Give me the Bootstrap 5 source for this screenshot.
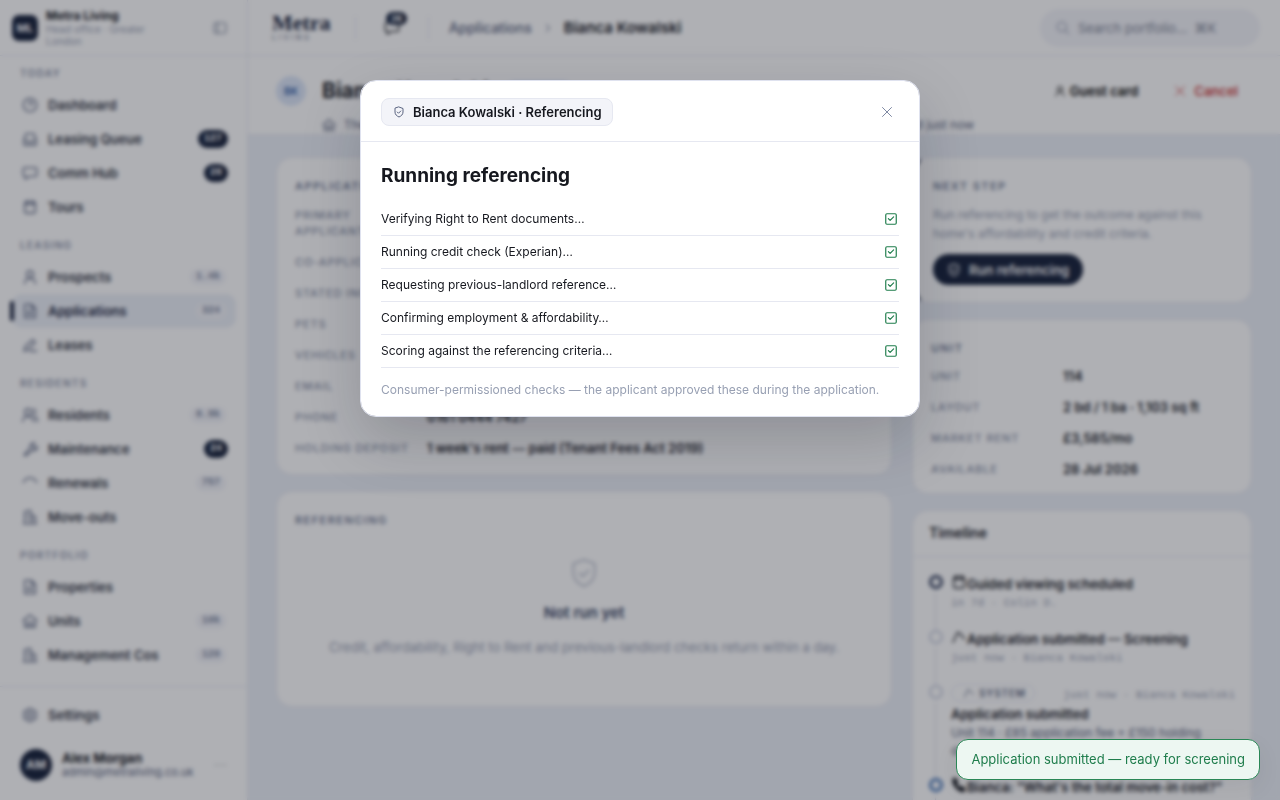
<!DOCTYPE html>
<html lang="en-GB">
<head>
<meta charset="utf-8">
<meta name="viewport" content="width=device-width, initial-scale=1">
<title>Bianca Kowalski · Referencing</title>
<link href="https://cdn.jsdelivr.net/npm/bootstrap@5.3.0/dist/css/bootstrap.min.css" rel="stylesheet">
<style>
:root{--navy:#16213a;--ink:#16181f;--slate:#5a6480;--muted:#98a0b3;--line:#e6e8f1;--soft:#f3f4f9;--page:#ecf0f7;--ok:#1f7d4c;--mono:"Liberation Mono",monospace}
body{font-family:Inter,sans-serif;font-size:13px;line-height:18px;color:var(--ink);background:var(--page)}
a{color:inherit;text-decoration:none}
svg{fill:none;stroke:currentColor;stroke-width:2;stroke-linecap:round;stroke-linejoin:round;flex:none}
.i12{width:12px;height:12px}.i14{width:14px;height:14px}.i16{width:16px;height:16px}
.i32{width:32px;height:32px;stroke-width:1.2;color:#b4bac9}
.sidebar{width:248px;background:#fff;border-right:1px solid var(--line)}
.brand-row{height:56px;padding:0 20px 0 12px;border-bottom:1px solid var(--line)}
.brand-row svg{color:#7d869c}
.brand-mark{width:26px;height:26px;border-radius:7px;background:var(--navy);color:#fff;font-weight:700;font-size:11px}
.org-name{font-size:12px;line-height:14px;font-weight:700}
.org-sub{font-size:10px;line-height:12px;color:var(--muted)}
.side-nav{padding:9px 11px 0 12px;overflow:hidden}
.side-label{font-size:10px;line-height:16px;height:23px;padding-left:8px;font-weight:600;letter-spacing:.13em;color:#8a92a8;margin:0}
.side-group{margin-bottom:13px}
.side-link{height:34px;padding:0 8px 0 10px;border-radius:10px;font-weight:600;color:#30343f;font-size:13px}
.side-link svg{color:var(--slate);margin-right:10px}
.side-link.active{background:var(--page);position:relative;color:var(--navy)}
.side-link.active::before{content:"";position:absolute;left:-2px;top:7px;width:4px;height:20px;border-radius:2px;background:var(--navy)}
.count{font-family:var(--mono);font-size:10px;line-height:16px;padding:0 6px;border-radius:8px;background:var(--soft);color:#7c86a0;margin-left:auto;margin-right:2px}
.count-hot{background:var(--navy);color:#fff;font-weight:700;line-height:18px;border-radius:9px;margin-right:0}
.side-foot{border-top:1px solid var(--line);padding:11px 12px 19px}
.user-row{padding:0 8px;margin-top:17px;gap:10px}
.user-name{font-size:13px;line-height:14px;font-weight:700}
.user-mail{font-size:11px;line-height:14px;color:var(--slate)}
.avatar-lg{width:32px;height:32px;background:var(--navy);color:#fff;font-size:12px;font-weight:700}
.topbar{height:56px;background:#fff;border-bottom:1px solid var(--line);padding:0 20px 0 24px}
.wordmark{font-family:"Liberation Serif",serif;font-weight:700;font-size:22px;line-height:20px;color:var(--navy)}
.wordmark-sub{font-size:7px;line-height:10px;letter-spacing:.4em;color:var(--slate)}
.rule{width:1px;height:24px;background:var(--line)}
.bubble-count{position:absolute;left:6px;top:-8px;font-size:9px;line-height:13px;font-weight:700;padding:0 5px;border-radius:7px;background:var(--navy);color:#fff}
.crumbs{gap:10px}
.crumb{font-size:14px;font-weight:500;color:var(--slate)}
.crumb-now{font-size:15px;font-weight:600}
.search{width:220px;height:38px;border-radius:19px;background:var(--soft);color:var(--muted)}
.search input{border:0;background:none;outline:0;font-size:13px;width:156px;padding:0;color:var(--ink)}
.search input::placeholder{color:#7d8496}
.subhead{background:#fff;padding:19px 28px 0;height:79px;border-bottom:1px solid var(--line)}
.avatar-sm{width:30px;height:30px;background:#dce6f8;color:#3c68ac;font-size:10px;font-weight:700}
.who{font-size:21px;line-height:32px;font-weight:700;margin:0}
.state{font-size:11px;line-height:20px;padding:0 8px;border-radius:10px;background:#dce6ff;color:#3c68ac}
.ghost{border:0;background:none;font-size:13px;font-weight:600;padding:0 14px;height:32px}
.danger-ink{color:#cc3b3b}
.subline{max-width:652px;margin:9px 0 0 46px;font-size:12px;color:var(--slate)}
.content{display:grid;grid-template-columns:minmax(0,1fr) 340px;gap:20px;padding:22px 28px;align-items:start}
.stack{display:grid;gap:16px}
.panel{background:#fff;border:1px solid var(--line);border-radius:16px;padding:19px 18px 18px}
.panel-facts{padding-bottom:11px}
.panel-title{font-size:11px;line-height:18px;font-weight:600;letter-spacing:.13em;color:#717b95;margin:0;text-transform:uppercase}
.facts{margin:4px 0 0}
.facts>div{display:grid;grid-template-columns:132px minmax(0,1fr);min-height:31px;align-items:center}
.facts dt{font-size:11px;line-height:16px;font-weight:500;letter-spacing:.08em;color:#8a92a8;text-transform:uppercase;padding-right:16px}
.facts dd{margin:0;font-weight:600}
.facts .tall{min-height:47px}
.unit-facts{padding-bottom:9px}
.unit-facts .facts{margin-top:3px}
.next{border-left:3px solid var(--navy);padding-bottom:17px}
.next p{color:var(--muted);font-size:12px;line-height:19px;margin:10px 0 11px}
.run{background:var(--navy);color:#fff;border:0;border-radius:16px;height:31px;padding:0 14px;font-weight:600;font-size:13px}
.empty{padding-top:28px;height:159px}
.empty-head{font-size:15px;line-height:20px;font-weight:600;color:#35415f;margin-top:14px}
.empty-text{color:var(--muted);margin-top:15px}
.tl-head{font-size:14px;line-height:20px;font-weight:600;margin:0;padding:12px 16px 13px;border-bottom:1px solid var(--line)}
.timeline{margin:0;padding:17px 16px;list-style:none}
.timeline li{padding-left:22px;position:relative;padding-bottom:17px}
.timeline li::before{content:"";position:absolute;left:6px;top:18px;bottom:-4px;width:1px;background:#dadde8}
.timeline li::after{content:"";position:absolute;left:0;top:1px;width:14px;height:14px;border-radius:50%;border:2px solid #c9cede;background:#fff}
.timeline .is-next::after{border:3px solid #35415f}
.timeline .is-chat::after{border:3px solid #4a78b8}
.event{font-weight:600;line-height:19px}
.event svg{vertical-align:-1px}
.event-text{color:var(--slate);font-size:12px}
.meta{font-family:var(--mono);font-size:11px;line-height:18px;color:var(--muted)}
.tag{font-size:10px;font-weight:600;letter-spacing:.08em;line-height:16px;border:1px solid var(--line);border-radius:9px;padding:0 8px 0 11px;margin-bottom:3px;color:var(--slate)}
.modal{background:rgba(20,24,36,.34);backdrop-filter:blur(2px)}
.modal-dialog{max-width:560px;margin:80px auto 0}
.modal-content{border:1px solid #dfe2ef;border-radius:16px;color:var(--ink);box-shadow:0 24px 60px rgba(15,20,35,.2)}
.modal-header{padding:17px 20px 15px;border-color:var(--line)}
.modal-body{padding:21px 20px 17px}
.subject{border:1px solid var(--line);border-radius:8px;background:var(--soft);font-weight:600;line-height:26px;padding:0 10px 0 11px}
.subject svg{color:var(--slate)}
.close-x{border:0;background:none;width:24px;height:24px;padding:0;color:#7f89a3}
.modal-title{font-size:19px;line-height:26px;font-weight:700}
.checks{margin:14px 0 13px;font-size:12px}
.checks li{height:33px;border-bottom:1px solid var(--line)}
.checks svg{color:var(--ok);margin-right:1px}
.footnote{font-size:12px;color:#98a0b3}
.notice{right:20px;bottom:20px;z-index:1090;border:1px solid #2a8756;border-radius:12px;background:#edf7f2;color:var(--ok);padding:10px 14px;line-height:19px;box-shadow:0 8px 24px rgba(15,20,35,.06)}
</style>
</head>
<body>
<svg class="d-none" aria-hidden="true">
<symbol id="shield" viewBox="0 0 24 24"><path d="M12 2l8 3v7c0 5-3.500 8-8 10-4.500-2-8-5-8-10V5zM8.500 12l2.500 2.500 4.500-4.500"/></symbol>
<symbol id="user" viewBox="0 0 24 24"><circle cx="12" cy="8" r="5"/><path d="M4 22c0-5 3-8 8-8s8 3 8 8"/></symbol>
<symbol id="users" viewBox="0 0 24 24"><circle cx="9" cy="8" r="5"/><path d="M1 22c0-5 3-8 8-8s8 3 8 8M17 3c4 1 4 8 0 9M19 15c3 1 4 4 4 7"/></symbol>
<symbol id="clock" viewBox="0 0 24 24"><circle cx="12" cy="12" r="10"/><path d="M12 6v6l4-3"/></symbol>
<symbol id="inbox" viewBox="0 0 24 24"><path d="M3 13l3-9h12l3 9v8H3zM3 14h5l2 3h4l2-3h5"/></symbol>
<symbol id="chat" viewBox="0 0 24 24"><path d="M4 4h16a2 2 0 012 2v9a2 2 0 01-2 2h-9l-6 4v-4H4a2 2 0 01-2-2V6a2 2 0 012-2z"/></symbol>
<symbol id="cal" viewBox="0 0 24 24"><rect x="4" y="4" width="16" height="17" rx="3"/><path d="M4 8h16M8 2v5M16 2v5"/></symbol>
<symbol id="doc" viewBox="0 0 24 24"><path d="M4 2h10l6 6v14H4zM14 2v6h6M8 13h8M8 17h8"/></symbol>
<symbol id="pen" viewBox="0 0 24 24"><path d="M3 21l2-7L16 4l4 4L9 19zM12 21h10"/></symbol>
<symbol id="wrench" viewBox="0 0 24 24"><path d="M3 21l9-10c-1-5 2-8 7-8l-3 4 1 3 4 1 2-3c0 5-4 7-8 6L6 22z"/></symbol>
<symbol id="arc" viewBox="0 0 24 24"><path d="M2 11c4-9 16-9 20 0"/></symbol>
<symbol id="bldg" viewBox="0 0 24 24"><path d="M4 22V4l9-2v20M13 9l7 2v11M2 22h20M8 8v1M8 13v1M16 15v1"/></symbol>
<symbol id="home" viewBox="0 0 24 24"><path d="M2 11l10-8 10 8M4 10v11h16V10M9 21v-7h6v7"/></symbol>
<symbol id="gear" viewBox="0 0 24 24"><path d="M12 2l9 5v10l-9 5-9-5V7z"/><circle cx="12" cy="12" r="4"/></symbol>
<symbol id="x" viewBox="0 0 24 24"><path d="M3 3l18 18M21 3L3 21"/></symbol>
<symbol id="search" viewBox="0 0 24 24"><circle cx="10" cy="10" r="8"/><path d="M16 16l6 6"/></symbol>
<symbol id="spark" viewBox="0 0 24 24"><path d="M3 20L10 5l5 3 5 7"/></symbol>
<symbol id="phone" viewBox="0 0 24 24"><path fill="currentColor" d="M3 3l4-1 3 6-2 2c1 3 3 5 5 6l3-2 5 4-2 4C11 22 2 12 3 3z"/></symbol>
<symbol id="check" viewBox="0 0 24 24"><rect x="3" y="3" width="18" height="18" rx="2"/><path d="M7.500 11.500l3 3 6-6"/></symbol>
<symbol id="panel" viewBox="0 0 24 24"><rect x="2" y="3" width="20" height="18" rx="3"/><path d="M8 3v18"/></symbol>
<symbol id="chev" viewBox="0 0 24 24"><path d="M9 5l6 7-6 7"/></symbol>
<symbol id="dots" viewBox="0 0 24 24"><path d="M4 12h1M12 12h1M20 12h1"/></symbol>
</svg>

<div class="d-flex vh-100 overflow-hidden">
<aside class="sidebar d-flex flex-column flex-shrink-0">
  <div class="brand-row d-flex align-items-center">
    <span class="brand-mark d-flex align-items-center justify-content-center flex-shrink-0 me-2">ML</span>
    <div class="flex-grow-1"><div class="org-name">Metra Living</div><div class="org-sub pe-5">Head office · Greater London</div></div>
    <svg class="i14"><use href="#panel"/></svg>
  </div>
  <nav class="side-nav flex-grow-1">
    <div class="side-group"><h2 class="side-label">TODAY</h2>
      <a href="#" class="side-link d-flex align-items-center"><svg class="i16"><use href="#clock"/></svg>Dashboard</a>
      <a href="#" class="side-link d-flex align-items-center"><svg class="i16"><use href="#inbox"/></svg>Leasing Queue<span class="count count-hot">127</span></a>
      <a href="#" class="side-link d-flex align-items-center"><svg class="i16"><use href="#chat"/></svg>Comm Hub<span class="count count-hot">26</span></a>
      <a href="#" class="side-link d-flex align-items-center"><svg class="i16"><use href="#cal"/></svg>Tours</a></div>
    <div class="side-group"><h2 class="side-label">LEASING</h2>
      <a href="#" class="side-link d-flex align-items-center"><svg class="i16"><use href="#user"/></svg>Prospects<span class="count">1.4k</span></a>
      <a href="#" class="side-link active d-flex align-items-center" aria-current="page"><svg class="i16"><use href="#doc"/></svg>Applications<span class="count">324</span></a>
      <a href="#" class="side-link d-flex align-items-center"><svg class="i16"><use href="#pen"/></svg>Leases</a></div>
    <div class="side-group"><h2 class="side-label">RESIDENTS</h2>
      <a href="#" class="side-link d-flex align-items-center"><svg class="i16"><use href="#users"/></svg>Residents<span class="count">8.9k</span></a>
      <a href="#" class="side-link d-flex align-items-center"><svg class="i16"><use href="#wrench"/></svg>Maintenance<span class="count count-hot">24</span></a>
      <a href="#" class="side-link d-flex align-items-center"><svg class="i16"><use href="#arc"/></svg>Renewals<span class="count">757</span></a>
      <a href="#" class="side-link d-flex align-items-center"><svg class="i16"><use href="#bldg"/></svg>Move-outs</a></div>
    <div class="side-group"><h2 class="side-label">PORTFOLIO</h2>
      <a href="#" class="side-link d-flex align-items-center"><svg class="i16"><use href="#doc"/></svg>Properties</a>
      <a href="#" class="side-link d-flex align-items-center"><svg class="i16"><use href="#home"/></svg>Units<span class="count">10k</span></a>
      <a href="#" class="side-link d-flex align-items-center"><svg class="i16"><use href="#bldg"/></svg>Management Cos<span class="count">120</span></a></div>
  </nav>
  <div class="side-foot">
    <a href="#" class="side-link d-flex align-items-center"><svg class="i16"><use href="#gear"/></svg>Settings</a>
    <div class="user-row d-flex align-items-center">
      <span class="avatar-lg rounded-circle d-flex align-items-center justify-content-center flex-shrink-0">AM</span>
      <div class="flex-grow-1"><div class="user-name">Alex Morgan</div><div class="user-mail">admin@metraliving.co.uk</div></div>
      <svg class="i14 text-secondary"><use href="#dots"/></svg>
    </div>
  </div>
</aside>

<div class="flex-grow-1 overflow-hidden">
  <header class="topbar d-flex align-items-center">
    <div><div class="wordmark">Metra</div><div class="wordmark-sub">LIVING</div></div>
    <span class="rule ms-4"></span>
    <a href="#" class="position-relative d-flex mx-4 ps-1" aria-label="Messages"><svg class="i16"><use href="#chat"/></svg><span class="bubble-count">26</span></a>
    <span class="rule mx-1"></span>
    <nav class="crumbs d-flex align-items-center ms-3" aria-label="Breadcrumb"><a href="#" class="crumb">Applications</a><svg class="i12 crumb"><use href="#chev"/></svg><span class="crumb-now">Bianca Kowalski</span></nav>
    <label class="search d-flex align-items-center ms-auto px-3 gap-2"><svg class="i14"><use href="#search"/></svg><input type="search" aria-label="Search portfolio" placeholder="Search portfolio…  ⌘K"></label>
  </header>
  <section class="subhead">
    <div class="d-flex align-items-center">
      <span class="avatar-sm rounded-circle d-flex align-items-center justify-content-center me-3">BK</span>
      <h1 class="who">Bianca Kowalski</h1><span class="state ms-3">Screening</span>
      <button type="button" class="ghost ms-auto d-flex align-items-center gap-1"><svg class="i12"><use href="#user"/></svg>Guest card</button>
      <button type="button" class="ghost danger-ink d-flex align-items-center gap-2 ms-2"><svg class="i12"><use href="#x"/></svg>Cancel</button>
    </div>
    <div class="subline d-flex align-items-center"><svg class="i14 me-2"><use href="#home"/></svg><span>The</span><span class="ms-auto">Submitted just now</span></div>
  </section>
  <main class="content">
    <div class="stack">
      <section class="panel panel-facts"><h2 class="panel-title">Application</h2>
        <dl class="facts">
          <div class="tall"><dt>Primary applicant</dt><dd>—</dd></div>
          <div><dt class="text-nowrap">Co-applicants</dt><dd>—</dd></div>
          <div><dt class="text-nowrap">Stated income</dt><dd>—</dd></div>
          <div><dt>Pets</dt><dd>—</dd></div>
          <div><dt>Vehicles</dt><dd>—</dd></div>
          <div><dt>Email</dt><dd>—</dd></div>
          <div><dt>Phone</dt><dd>0161 0444 7427</dd></div>
          <div><dt class="text-nowrap">Holding deposit</dt><dd>1 week's rent — paid (Tenant Fees Act 2019)</dd></div>
        </dl></section>
      <section class="panel"><h2 class="panel-title">Referencing</h2>
        <div class="empty text-center"><svg class="i32"><use href="#shield"/></svg>
          <div class="empty-head">Not run yet</div><div class="empty-text">Credit, affordability, Right to Rent and previous-landlord checks return within a day.</div></div></section>
    </div>
    <div class="stack">
      <section class="panel next"><h2 class="panel-title">Next step</h2>
        <p>Run referencing to get the outcome against this home's affordability and credit criteria.</p>
        <button type="button" class="run d-flex align-items-center gap-2"><svg class="i14"><use href="#shield"/></svg>Run referencing</button></section>
      <section class="panel unit-facts"><h2 class="panel-title">Unit</h2>
        <dl class="facts">
          <div><dt>Unit</dt><dd>114</dd></div>
          <div><dt>Layout</dt><dd>2 bd / 1 ba · 1,103 sq ft</dd></div>
          <div><dt>Market rent</dt><dd>£3,585/mo</dd></div>
          <div><dt>Available</dt><dd>28 Jul 2026</dd></div>
        </dl></section>
      <section class="panel p-0"><h2 class="tl-head">Timeline</h2>
        <ol class="timeline">
          <li class="is-next"><div class="event"><svg class="i16"><use href="#cal"/></svg>Guided viewing scheduled</div><div class="meta">in 7d · Colin D.</div></li>
          <li><div class="event"><svg class="i16"><use href="#spark"/></svg>Application submitted — Screening</div><div class="meta">just now · Bianca Kowalski</div></li>
          <li><div class="d-flex align-items-center justify-content-between"><span class="tag d-flex align-items-center gap-1"><svg class="i12"><use href="#spark"/></svg>SYSTEM</span><span class="meta">just now · Bianca Kowalski</span></div>
            <div class="event">Application submitted</div><div class="event-text">Unit 114 · £85 application fee + £150 holding deposit received</div></li>
          <li class="is-chat"><div class="event"><svg class="i16"><use href="#phone"/></svg>Bianca: "What's the total move-in cost?"</div></li>
        </ol></section>
    </div>
  </main>
</div>
</div>

<div class="modal show d-block" role="dialog" aria-modal="true" aria-labelledby="runTitle">
  <div class="modal-dialog"><div class="modal-content">
    <div class="modal-header d-flex align-items-center justify-content-between">
      <span class="subject d-flex align-items-center gap-2"><svg class="i12"><use href="#shield"/></svg>Bianca Kowalski · Referencing</span>
      <button type="button" class="close-x d-flex align-items-center justify-content-center" aria-label="Close"><svg class="i12"><use href="#x"/></svg></button>
    </div>
    <div class="modal-body">
      <h2 class="modal-title" id="runTitle">Running referencing</h2>
      <ul class="checks list-unstyled">
        <li class="d-flex align-items-center justify-content-between">Verifying Right to Rent documents…<svg class="i14"><use href="#check"/></svg></li>
        <li class="d-flex align-items-center justify-content-between">Running credit check (Experian)…<svg class="i14"><use href="#check"/></svg></li>
        <li class="d-flex align-items-center justify-content-between">Requesting previous-landlord reference…<svg class="i14"><use href="#check"/></svg></li>
        <li class="d-flex align-items-center justify-content-between">Confirming employment &amp; affordability…<svg class="i14"><use href="#check"/></svg></li>
        <li class="d-flex align-items-center justify-content-between">Scoring against the referencing criteria…<svg class="i14"><use href="#check"/></svg></li>
      </ul>
      <div class="footnote">Consumer-permissioned checks — the applicant approved these during the application.</div>
    </div>
  </div></div>
</div>
<div class="notice position-fixed" role="status">Application submitted — ready for screening</div>
<script src="https://cdn.jsdelivr.net/npm/bootstrap@5.3.0/dist/js/bootstrap.bundle.min.js"></script>
</body>
</html>
